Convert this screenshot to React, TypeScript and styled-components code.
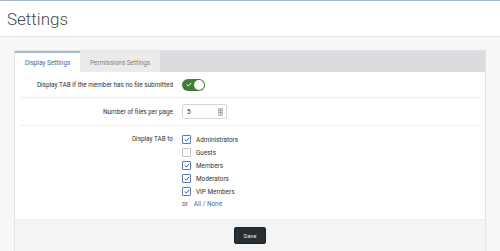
import styled, { createGlobalStyle } from "styled-components";

const GlobalStyle = createGlobalStyle`
  html, body {
    margin: 0;
    padding: 0;
    background: #f7f7f7;
    font-family: Roboto, "Liberation Sans", sans-serif;
  }
`;

const Page = styled.div`
  width: 500px;
  height: 251px;
  overflow: hidden;
  background: #f7f7f7;
`;

const Header = styled.header`
  height: 35px;
  background: #fff;
  border-top: 1px solid #a6b8cc;
  border-bottom: 1px solid #e2e2e2;
  display: flex;
  align-items: center;
  padding-left: 7px;
`;

const Title = styled.h1`
  margin: 0;
  font-size: 17px;
  font-weight: 300;
  color: #4a4a4a;
`;

const Main = styled.main`
  padding: 13px 14px 0 14px;
`;

const Card = styled.section`
  background: #fff;
  border: 1px solid #e4e4e4;
  box-shadow: 0 1px 1px rgba(0, 0, 0, 0.04);
`;

const TabBar = styled.div`
  display: flex;
  height: 21px;
  background: #dcdbe0;
`;

const Tab = styled.div<{ $active?: boolean }>`
  display: flex;
  align-items: center;
  justify-content: center;
  white-space: nowrap;
  font-size: 6.4px;
  border-top: 2px solid ${(p) => (p.$active ? "#a6b8cc" : "transparent")};
  background: ${(p) => (p.$active ? "#fff" : "#ebebeb")};
  color: ${(p) => (p.$active ? "#3e6a96" : "#808080")};
  box-sizing: border-box;
  width: ${(p) => (p.$active ? "65px" : "80px")};
`;

const Body = styled.div`
  padding: 0 5px;
`;

const Row = styled.div<{ $h: number }>`
  display: grid;
  grid-template-columns: 153px 1fr;
  column-gap: 9px;
  align-items: ${(p) => (p.$h > 40 ? "start" : "center")};
  min-height: ${(p) => p.$h}px;
  border-bottom: 1px solid #efefef;
  padding: ${(p) => (p.$h > 40 ? "9px 0 9px" : "0")};
  box-sizing: border-box;
  &:last-child {
    border-bottom: none;
  }
`;

const Label = styled.div`
  text-align: right;
  font-size: 6.4px;
  color: #333;
  white-space: nowrap;
`;

const Toggle = styled.div`
  width: 23px;
  height: 12px;
  border-radius: 6px;
  background: #437a3c;
  position: relative;
  display: flex;
  align-items: center;
  padding-left: 4px;
  box-sizing: border-box;
`;

const Knob = styled.div`
  position: absolute;
  right: 1px;
  top: 1px;
  width: 10px;
  height: 10px;
  border-radius: 50%;
  background: #fff;
`;

const NumberBox = styled.div`
  width: 45px;
  height: 15px;
  border: 1px solid #d6d6d6;
  border-radius: 2px;
  box-sizing: border-box;
  display: flex;
  align-items: center;
  justify-content: space-between;
  padding: 0 3px 0 4px;
  font-size: 6.4px;
  color: #222;
`;

const Spinner = styled.div`
  width: 5px;
  height: 8px;
  background: #e0e0e0;
  border: 1px solid #bdbdbd;
  box-sizing: border-box;
  display: flex;
  flex-direction: column;
  align-items: center;
  justify-content: space-around;
  font-size: 3px;
  line-height: 3px;
  color: #555;
`;

const List = styled.div`
  display: flex;
  flex-direction: column;
  gap: 4px;
`;

const Option = styled.label`
  display: flex;
  align-items: center;
  gap: 5px;
  font-size: 6.4px;
  color: #333;
  height: 9px;
`;

const Box = styled.span<{ $on: boolean }>`
  width: 7px;
  height: 7px;
  border: 1px solid ${(p) => (p.$on ? "#5a7fa8" : "#c4c4c4")};
  border-radius: 1px;
  background: #fff;
  display: flex;
  align-items: center;
  justify-content: center;
`;

const Links = styled.div`
  font-size: 6.4px;
  color: #555;
  margin-top: 0;
  display: flex;
  gap: 6px;
`;

const Link = styled.span`
  color: #3c6fa8;
`;

const Footer = styled.div`
  background: #f4f4f4;
  height: 31px;
  display: flex;
  align-items: center;
  justify-content: center;
  border-top: 1px solid #eee;
`;

const SaveButton = styled.button`
  width: 32px;
  height: 17px;
  background: #262e36;
  border: 1px solid #1c2228;
  border-radius: 2px;
  color: #e6e6e6;
  font-family: Roboto, "Liberation Sans", sans-serif;
  font-size: 6px;
  padding: 0;
`;

const Tick = ({ color }: { color: string }) => (
  <svg width="6" height="5" viewBox="0 0 6 5">
    <path d="M0.7 2.6 L2.3 4 L5.3 0.9" fill="none" stroke={color} strokeWidth="1" />
  </svg>
);

const groups = [
  { name: "Administrators", on: true },
  { name: "Guests", on: false },
  { name: "Members", on: true },
  { name: "Moderators", on: true },
  { name: "VIP Members", on: true },
];

export default function App() {
  return (
    <Page>
      <GlobalStyle />
      <Header>
        <Title>Settings</Title>
      </Header>
      <Main>
        <Card>
          <TabBar>
            <Tab $active>Display Settings</Tab>
            <Tab>Permissions Settings</Tab>
          </TabBar>
          <Body>
            <Row $h={26}>
              <Label>Display TAB if the member has no file submitted</Label>
              <div>
                <Toggle>
                  <Tick color="#fff" />
                  <Knob />
                </Toggle>
              </div>
            </Row>
            <Row $h={28}>
              <Label>Number of files per page</Label>
              <div>
                <NumberBox>
                  5
                  <Spinner>
                    <span>▲</span>
                    <span>▼</span>
                  </Spinner>
                </NumberBox>
              </div>
            </Row>
            <Row $h={93}>
              <Label>Display TAB to</Label>
              <List>
                {groups.map((g) => (
                  <Option key={g.name}>
                    <Box $on={g.on}>{g.on && <Tick color="#2d5c8f" />}</Box>
                    {g.name}
                  </Option>
                ))}
                <Links>
                  or <Link>All / None</Link>
                </Links>
              </List>
            </Row>
          </Body>
          <Footer>
            <SaveButton>Save</SaveButton>
          </Footer>
        </Card>
      </Main>
    </Page>
  );
}
